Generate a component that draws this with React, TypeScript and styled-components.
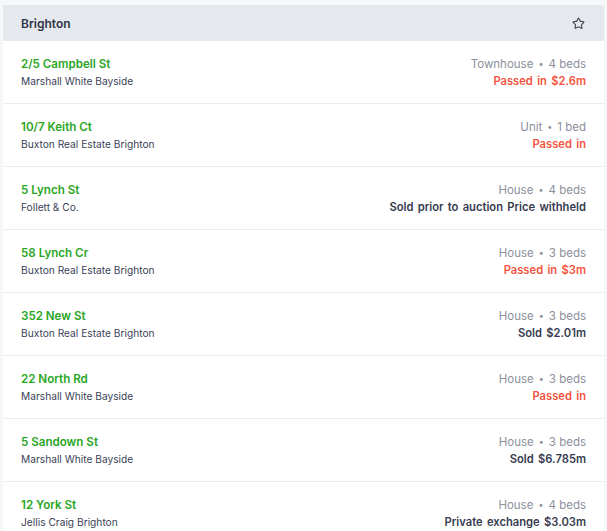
import React from "react";
import styled, { createGlobalStyle } from "styled-components";
import { Star } from "lucide-react";

const GlobalStyle = createGlobalStyle`
  html, body {
    margin: 0;
    padding: 0;
    background: #f6f7f9;
    font-family: Inter, "Noto Sans", "Liberation Sans", sans-serif;
  }
`;

const Page = styled.div`
  padding: 5px 3px 0 3px;
`;

const Card = styled.div`
  background: #ffffff;
  display: flex;
  flex-direction: column;
`;

const Header = styled.div`
  background: #e5e8ec;
  height: 36px;
  display: flex;
  align-items: center;
  justify-content: space-between;
  padding: 0 19px 0 18px;
`;

const HeaderText = styled.h2`
  margin: 0;
  font-size: 12px;
  font-weight: 600;
  color: #2f3447;
`;

const Row = styled.div`
  height: 62px;
  box-sizing: content-box;
  display: flex;
  justify-content: space-between;
  align-items: flex-start;
  padding: 0 18px;
  border-bottom: 1px solid #eceef1;
`;

const Column = styled.div<{ $right?: boolean }>`
  display: flex;
  flex-direction: column;
  align-items: ${(p) => (p.$right ? "flex-end" : "flex-start")};
  padding-top: 15px;
  gap: 1px;
`;

const Address = styled.div`
  font-size: 11.6px;
  font-weight: 600;
  color: #2aa61f;
  line-height: 16px;
`;

const Agent = styled.div`
  font-size: 10.2px;
  color: #3a3f58;
  line-height: 16px;
`;

const Meta = styled.div`
  font-size: 11.5px;
  color: #8b909c;
  line-height: 16px;
`;

const Dot = styled.span`
  margin: 0 5px;
  font-size: 9px;
  vertical-align: 1px;
`;

const Result = styled.div<{ $passed?: boolean }>`
  font-size: 11.2px;
  font-weight: 600;
  line-height: 16px;
  word-spacing: 1.5px;
  color: ${(p) => (p.$passed ? "#f4533e" : "#363b50")};
`;

const sales = [
  { address: "2/5 Campbell St", agent: "Marshall White Bayside", type: "Townhouse", beds: "4 beds", result: "Passed in $2.6m", passed: true },
  { address: "10/7 Keith Ct", agent: "Buxton Real Estate Brighton", type: "Unit", beds: "1 bed", result: "Passed in", passed: true },
  { address: "5 Lynch St", agent: "Follett & Co.", type: "House", beds: "4 beds", result: "Sold prior to auction Price withheld", passed: false },
  { address: "58 Lynch Cr", agent: "Buxton Real Estate Brighton", type: "House", beds: "3 beds", result: "Passed in $3m", passed: true },
  { address: "352 New St", agent: "Buxton Real Estate Brighton", type: "House", beds: "3 beds", result: "Sold $2.01m", passed: false },
  { address: "22 North Rd", agent: "Marshall White Bayside", type: "House", beds: "3 beds", result: "Passed in", passed: true },
  { address: "5 Sandown St", agent: "Marshall White Bayside", type: "House", beds: "3 beds", result: "Sold $6.785m", passed: false },
  { address: "12 York St", agent: "Jellis Craig Brighton", type: "House", beds: "4 beds", result: "Private exchange $3.03m", passed: false },
];

const App: React.FunctionComponent = () => {
  return (
    <Page>
      <GlobalStyle />
      <Card>
        <Header>
          <HeaderText>Brighton</HeaderText>
          <Star size={13} strokeWidth={2} color="#3a3f52" />
        </Header>
        {sales.map((sale, index) => (
          <Row key={index}>
            <Column>
              <Address>{sale.address}</Address>
              <Agent>{sale.agent}</Agent>
            </Column>
            <Column $right>
              <Meta>
                {sale.type}
                <Dot>•</Dot>
                {sale.beds}
              </Meta>
              <Result $passed={sale.passed}>{sale.result}</Result>
            </Column>
          </Row>
        ))}
      </Card>
    </Page>
  );
};

export default App;
